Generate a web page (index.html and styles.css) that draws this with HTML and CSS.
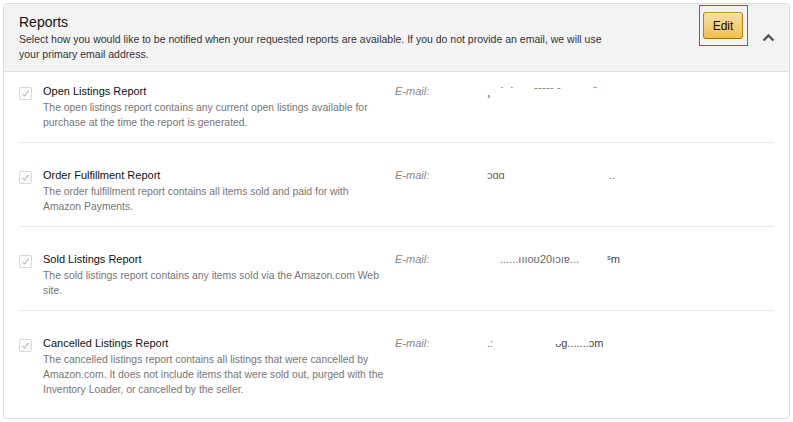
FILE: index.html
```html
<!DOCTYPE html>
<html>
<head>
<meta charset="utf-8">
<link rel="stylesheet" href="styles.css">
</head>
<body>
<div class="panel">
  <div class="panel-header">
    <div class="header-text">
      <h2 class="title">Reports</h2>
      <p class="intro">Select how you would like to be notified when your requested reports are available. If you do not provide an email, we will use your primary email address.</p>
    </div>
    <div class="edit-highlight">
      <button class="edit-btn">Edit</button>
    </div>
    <div class="collapse">
      <svg width="13" height="9" viewBox="0 0 13 9"><polyline points="1.5,7.5 6.5,2.5 11.5,7.5" fill="none" stroke="#555" stroke-width="2.4"/></svg>
    </div>
  </div>
  <div class="rows">
    <div class="row">
      <span class="check"><svg width="11" height="11" viewBox="0 0 11 11"><polyline points="2.5,5.8 4.5,7.8 8.5,3" fill="none" stroke="#bdbdbd" stroke-width="1.2"/></svg></span>
      <div class="info">
        <div class="name">Open Listings Report</div>
        <div class="desc">The open listings report contains any current open listings available for purchase at the time the report is generated.</div>
      </div>
      <div class="label">E-mail:</div>
      <div class="value"><span class="f1">¸</span><span class="f2">˙  ˙</span><span class="f3">⁻⁻⁻⁻⁻ ⁻</span><span class="f4">¨</span></div>
    </div>
    <div class="row">
      <span class="check"><svg width="11" height="11" viewBox="0 0 11 11"><polyline points="2.5,5.8 4.5,7.8 8.5,3" fill="none" stroke="#bdbdbd" stroke-width="1.2"/></svg></span>
      <div class="info">
        <div class="name">Order Fulfillment Report</div>
        <div class="desc">The order fulfillment report contains all items sold and paid for with Amazon Payments.</div>
      </div>
      <div class="label">E-mail:</div>
      <div class="value"><span class="f1 low">ɔɑɑ</span><span class="f5">..</span></div>
    </div>
    <div class="row">
      <span class="check"><svg width="11" height="11" viewBox="0 0 11 11"><polyline points="2.5,5.8 4.5,7.8 8.5,3" fill="none" stroke="#bdbdbd" stroke-width="1.2"/></svg></span>
      <div class="info">
        <div class="name">Sold Listings Report</div>
        <div class="desc">The sold listings report contains any items sold via the Amazon.com Web site.</div>
      </div>
      <div class="label">E-mail:</div>
      <div class="value"><span class="f6 low">......ıııoʊ20ıɔıɐ...</span><span class="f7">ˢm</span></div>
    </div>
    <div class="row">
      <span class="check"><svg width="11" height="11" viewBox="0 0 11 11"><polyline points="2.5,5.8 4.5,7.8 8.5,3" fill="none" stroke="#bdbdbd" stroke-width="1.2"/></svg></span>
      <div class="info">
        <div class="name">Cancelled Listings Report</div>
        <div class="desc">The cancelled listings report contains all listings that were cancelled by Amazon.com. It does not include items that were sold out, purged with the Inventory Loader, or cancelled by the seller.</div>
      </div>
      <div class="label">E-mail:</div>
      <div class="value"><span class="f1 low">.:</span><span class="f8">ᴗg.......ɔm</span></div>
    </div>
  </div>
</div>
</body>
</html>
```

FILE: styles.css
```css
* { box-sizing: border-box; }
body {
  margin: 3px;
  background: #fff;
  font-family: "Liberation Sans", Arial, sans-serif;
  color: #111;
}
.panel {
  border: 1px solid #dcdcdc;
  border-radius: 4px;
  box-shadow: 0 1px 1px rgba(0,0,0,0.06);
  overflow: hidden;
}
.panel-header {
  display: flex;
  align-items: flex-start;
  background: #f3f3f3;
  border-bottom: 1px solid #dedede;
  padding-left: 15px;
}
.header-text {
  flex: 1;
  padding: 9px 0 9px 0;
}
.title {
  margin: 0;
  font-size: 14px;
  line-height: 19px;
  font-weight: normal;
  color: #111;
}
.intro {
  margin: 0;
  font-size: 10.5px;
  line-height: 15px;
  color: #333;
  max-width: 590px;
}
.edit-highlight {
  margin-top: 1px;
  margin-left: 20px;
  border: 1px solid #e8303a;
  padding: 6px 4px 6px 3px;
}
.edit-btn {
  display: block;
  width: 40px;
  height: 27px;
  padding: 0;
  border: 1px solid;
  border-color: #c89411 #b0820f #99710d;
  border-radius: 3px;
  background: linear-gradient(#f7dfa5, #f0c14b);
  font-family: "Liberation Sans", Arial, sans-serif;
  font-size: 12px;
  color: #111;
  box-shadow: inset 0 1px 0 rgba(255,255,255,0.4);
}
.collapse {
  width: 41px;
  padding: 29px 0 0 14px;
  line-height: 0;
}
.rows {
  padding: 0 15px;
}
.row {
  display: flex;
  align-items: flex-start;
  padding: 24px 0 12px;
  border-bottom: 1px solid #e7e7e7;
}
.row:first-child { padding-top: 11px; }
.row:last-child { border-bottom: none; padding-bottom: 21px; }
.check {
  flex: none;
  width: 13px;
  height: 13px;
  margin-top: 4px;
  border: 1px solid #d8d8d8;
  border-radius: 2px;
  background: #fcfcfc;
  line-height: 0;
}
.info {
  flex: none;
  width: 343px;
  margin-left: 11px;
}
.name {
  font-size: 11px;
  line-height: 17px;
  color: #111;
}
.desc {
  font-size: 10.4px;
  line-height: 15px;
  color: #767676;
}
.label {
  flex: none;
  width: 90px;
  margin-left: 9px;
  font-size: 11px;
  line-height: 17px;
  font-style: italic;
  color: #888;
}
.value {
  font-size: 11px;
  line-height: 17px;
  color: #444;
  white-space: pre;
}
.low { color: #666; }
.f1 { margin-left: 2px; }
.f2 { margin-left: 10px; }
.f3 { margin-left: 20px; }
.f4 { margin-left: 32px; }
.f5 { margin-left: 104px; color: #666; }
.f6 { margin-left: 15px; }
.f7 { margin-left: 28px; }
.f8 { margin-left: 62px; }
```
